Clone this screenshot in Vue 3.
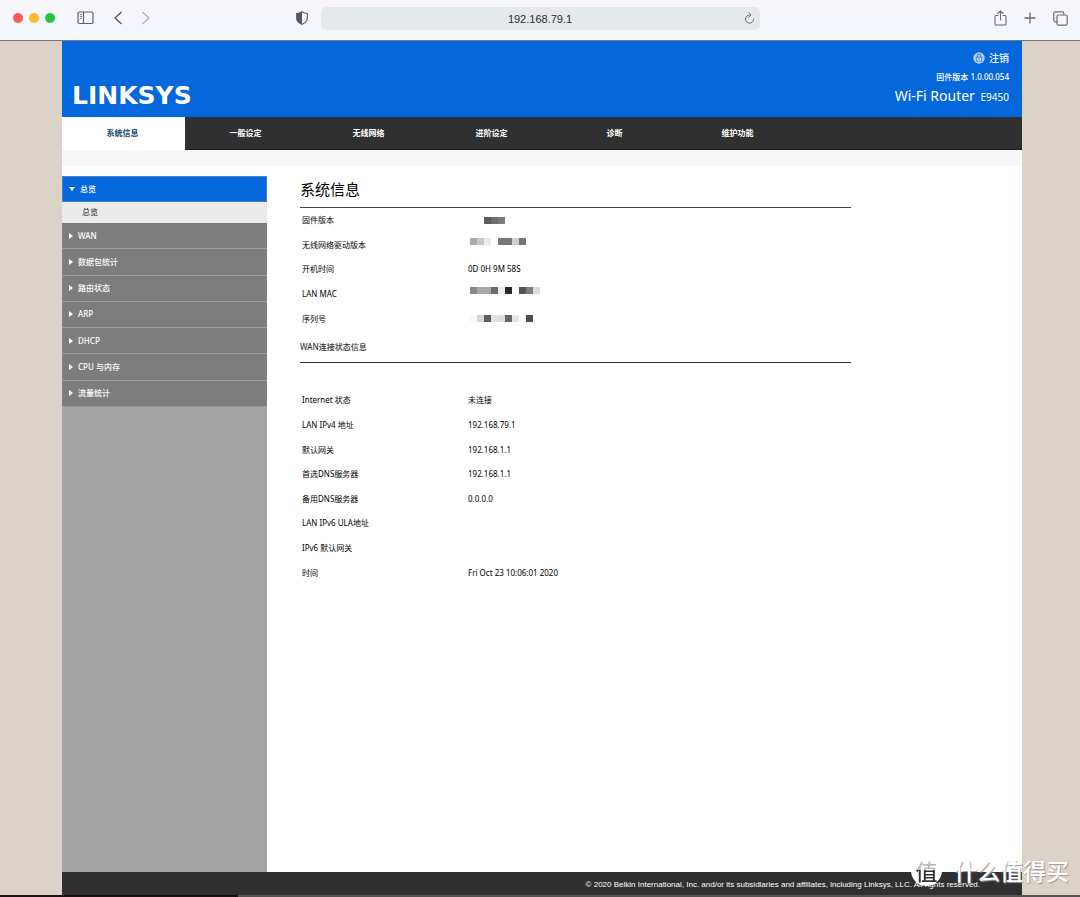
<script setup>
import { ref } from 'vue'

const address = ref('192.168.79.1')

const tabs = ['系统信息', '一般设定', '无线网络', '进阶设定', '诊断', '维护功能']
const sections = ['WAN', '数据包统计', '路由状态', 'ARP', 'DHCP', 'CPU 与内存', '流量统计']

// Masked values are lists of block colours.
const system = [
  { label: '固件版本', mask: ['', '', '#5c5c5c', '#6e6e6e', '#7c7c7c'] },
  { label: '无线网络驱动版本', mask: ['#adadad', '#c9c9c9', '#ebebeb', '', '#777', '#777', '#cfcfcf', '#757575'], raised: true },
  { label: '开机时间', value: '0D 0H 9M 58S' },
  { label: 'LAN MAC', mask: ['#8a8a8a', '#a8a8a8', '#a8a8a8', '#6c6c6c', '#ececec', '#272727', '', '#555', '#7b7b7b', '#dcdcdc'], raised: true },
  { label: '序列号', mask: ['#f8f8f8', '#d6d6d6', '#5e5e5e', '#e2e2e2', '#dedede', '#666', '#e6e6e6', '#fafafa', '#4d4d4d'] },
]

const wan = [
  { label: 'Internet 状态', value: '未连接' },
  { label: 'LAN IPv4 地址', value: '192.168.79.1' },
  { label: '默认网关', value: '192.168.1.1' },
  { label: '首选DNS服务器', value: '192.168.1.1' },
  { label: '备用DNS服务器', value: '0.0.0.0' },
  { label: 'LAN IPv6 ULA地址', value: '' },
  { label: 'IPv6 默认网关', value: '' },
  { label: '时间', value: 'Fri Oct 23 10:06:01 2020' },
]
</script>

<template>
  <div class="window">
    <header class="toolbar">
      <div class="tools left">
        <div class="lights">
          <button class="light red" aria-label="关闭"></button>
          <button class="light yellow" aria-label="最小化"></button>
          <button class="light green" aria-label="全屏"></button>
        </div>
        <button class="tool sidebar-tool" aria-label="边栏">
          <svg width="17" height="14" viewBox="0 0 17 14" fill="none" stroke="#5d6064">
            <rect x="1" y="1" width="15" height="11.5" rx="1.5" stroke-width="1.2" />
            <path d="M6.5 1v11.5" stroke-width="1.1" />
            <path d="M2.8 3.5h2M2.8 5.5h2M2.8 7.5h2" stroke-width=".8" />
          </svg>
        </button>
        <button class="tool back" aria-label="后退">
          <svg width="8" height="14" viewBox="0 0 8 14" fill="none" stroke="#505357" stroke-width="1.3" stroke-linecap="round" stroke-linejoin="round"><path d="M7 1.5 1 7l6 5.5" /></svg>
        </button>
        <button class="tool" aria-label="前进">
          <svg width="8" height="14" viewBox="0 0 8 14" fill="none" stroke="#aeb1b5" stroke-width="1.2" stroke-linecap="round" stroke-linejoin="round"><path d="m1 1.5 6 5.5-6 5.5" /></svg>
        </button>
        <button class="tool shield" aria-label="隐私报告">
          <svg width="12" height="14" viewBox="0 0 12 14">
            <path d="M6 .8C7.800 2 9.500 2.400 11.300 2.500V7.500C11.300 10.300 9 12 6 13.300 3 12 .7 10.300 .7 7.500V2.500C2.500 2.400 4.200 2 6 .8Z" fill="none" stroke="#55585c" stroke-width="1.1" />
            <path d="M6 .8v12.500C3 12 .7 10.300 .7 7.500V2.500C2.500 2.400 4.200 2 6 .8Z" fill="#55585c" />
          </svg>
        </button>
      </div>
      <div class="address">
        <input v-model="address" type="text" aria-label="地址" />
        <button class="tool" aria-label="重新载入">
          <svg width="11" height="12" viewBox="0 0 11 12" fill="none" stroke="#6b6e72" stroke-linecap="round" stroke-linejoin="round"><path d="M5.500 3A4.100 4.100 0 1 0 9.600 7M4.800 .7 7 3 4.800 5.200" /></svg>
        </button>
      </div>
      <div class="tools right">
        <button class="tool" aria-label="共享">
          <svg width="13" height="16" viewBox="0 0 13 16" fill="none" stroke="#6a6d71" stroke-width="1.1" stroke-linecap="round" stroke-linejoin="round"><path d="M4 5.500H2Q1 5.500 1 6.500V14Q1 15 2 15H11Q12 15 12 14V6.500Q12 5.500 11 5.500H9M6.500 10V1M3.800 3.500 6.500 .8 9.200 3.500" /></svg>
        </button>
        <button class="tool" aria-label="新标签页">
          <svg width="12" height="12" viewBox="0 0 12 12" stroke="#6a6d71" stroke-width="1.3" stroke-linecap="round"><path d="M6 1v10M1 6h10" /></svg>
        </button>
        <button class="tool" aria-label="标签页概览">
          <svg width="15" height="15" viewBox="0 0 15 15" fill="none" stroke="#6a6d71" stroke-width="1.2"><rect x="4" y="4" width="10.200" height="10.200" rx="1.500" /><path d="M4 10.800H2.300Q.8 10.800 .8 9.300V2.300Q.8 .8 2.300 .8H9.300Q10.800 .8 10.800 2.300V4" /></svg>
        </button>
      </div>
    </header>

    <div class="stage">
      <div class="site">
        <div class="banner">
          <a class="brand" href="#">LINKSYS</a>
          <div class="device">
            <a class="logout" href="#">
              <svg width="12" height="12" viewBox="0 0 12 12">
                <circle cx="6" cy="6" r="5.700" fill="#b5d2f5" />
                <path d="M4.300 5.500V3.800a1.700 1.700 0 0 1 3.400 0V5.500" fill="none" stroke="#2d6fc4" />
                <rect x="3.300" y="5.200" width="5.400" height="3.900" fill="#d7e7fb" stroke="#3977c6" stroke-width=".8" />
                <path d="M6 6.200v1.800" stroke="#2d6fc4" />
              </svg>
              注销
            </a>
            <span class="firmware">固件版本 1.0.00.054</span>
            <span class="model">Wi-Fi Router <small>E9450</small></span>
          </div>
        </div>

        <nav class="tabs">
          <a v-for="(tab, i) in tabs" :key="tab" href="#" :class="{ active: i === 0 }">{{ tab }}</a>
        </nav>
        <div class="strip"></div>

        <div class="body">
          <aside class="menu">
            <a class="entry open" href="#"><i class="arrow down"></i>总览</a>
            <a class="sub" href="#">总览</a>
            <div class="sections">
              <a v-for="name in sections" :key="name" class="entry" href="#"><i class="arrow"></i>{{ name }}</a>
            </div>
          </aside>

          <main class="content">
            <h1>系统信息</h1>
            <table class="system">
              <tbody>
                <tr v-for="row in system" :key="row.label">
                  <th scope="row">{{ row.label }}</th>
                  <td :class="{ raised: row.raised }">
                    <span v-if="row.mask" class="mask"><i v-for="(tone, i) in row.mask" :key="i" :style="{ background: tone }"></i></span>
                    <template v-else>{{ row.value }}</template>
                  </td>
                </tr>
              </tbody>
            </table>
            <h2>WAN连接状态信息</h2>
            <table class="wan">
              <tbody>
                <tr v-for="row in wan" :key="row.label">
                  <th scope="row">{{ row.label }}</th>
                  <td>{{ row.value }}</td>
                </tr>
              </tbody>
            </table>
          </main>
        </div>

        <footer>© 2020 Belkin International, Inc. and/or its subsidiaries and affiliates, including Linksys, LLC. All rights reserved.</footer>
      </div>
    </div>
    <div class="desktop-edge"></div>

    <div class="watermark"><span class="seal"><b>值</b></span><span>什么值得买</span></div>
  </div>
</template>

<style>
body {
  margin: 0;
  background: #dbd3c8;
}
</style>

<style scoped>
* {
  box-sizing: border-box;
}
.window {
  position: relative;
  display: flex;
  flex-direction: column;
  min-height: 100vh;
  font: 8px/12px "Noto Sans", "Noto Sans CJK SC", sans-serif;
  color: #000;
}
a {
  color: inherit;
  text-decoration: none;
}
button {
  border: 0;
  padding: 0;
  background: none;
}
svg {
  display: block;
}

.toolbar {
  display: grid;
  grid-template-columns: 1fr minmax(0, 439px) 1fr;
  align-items: center;
  height: 41px;
  padding-bottom: 4px;
  background: linear-gradient(#f7f5fa, #f3f7fb 60%);
  border-bottom: 1px solid #74777c;
}
.tools {
  display: flex;
  align-items: center;
}
.left {
  padding: 0 13px;
}
.lights {
  display: flex;
  gap: 6px;
}
.light {
  width: 10px;
  height: 10px;
  border-radius: 50%;
}
.red {
  background: #fc5b57;
}
.yellow {
  background: #fdb92d;
}
.green {
  background: #27c53f;
}
.sidebar-tool {
  margin-left: 22px;
}
.back {
  margin: 0 20px;
}
.shield {
  margin-left: auto;
}
.address {
  display: flex;
  align-items: center;
  height: 23px;
  padding: 0 5px 0 16px;
  border-radius: 5px;
  background: #e6e9ec;
}
.address input {
  flex: 1;
  min-width: 0;
  border: 0;
  padding: 1px 0 0;
  background: none;
  color: #2b2d30;
  font: 11px/16px "Liberation Sans", sans-serif;
  text-align: center;
  outline: 0;
}
.right {
  justify-content: flex-end;
  gap: 17px;
  padding-right: 12px;
}

.stage {
  flex: 1;
  display: flex;
  justify-content: center;
  padding-left: 4px;
}
.site {
  display: flex;
  flex-direction: column;
  width: 100%;
  max-width: 960px;
  background: #fff;
}
.banner {
  display: flex;
  justify-content: space-between;
  align-items: flex-end;
  height: 76px;
  padding: 0 13px 10px 10px;
  background: #0567dc;
  color: #fff;
}
.brand {
  font: bold 25px/22px "DejaVu Sans", sans-serif;
}
.device {
  display: flex;
  flex-direction: column;
  align-items: flex-end;
}
.logout {
  display: flex;
  align-items: center;
  gap: 4px;
  font-size: 10px;
  line-height: 16px;
  font-weight: 500;
}
.firmware {
  margin-top: 5px;
  font-weight: 500;
}
.model {
  margin-top: 3px;
  font-size: 14px;
  line-height: 20px;
}
.model small {
  margin-left: 2px;
  font-size: 10px;
}

.tabs {
  display: flex;
  height: 33px;
  background: #303030;
  border-bottom: 1px solid #1d1d1d;
  color: #fff;
}
.tabs a {
  flex: 0 1 123px;
  padding-right: 2px;
  font-weight: bold;
  line-height: 32px;
  text-align: center;
}
.tabs .active {
  height: 33px;
  background: #fff;
  color: #204a78;
}
.strip {
  height: 16px;
  background: #f7f7f8;
}

.body {
  flex: 1;
  display: flex;
  margin-top: 10px;
}
.menu {
  flex: 0 0 205px;
  background: #a4a4a4;
  color: #fff;
}
.sections {
  display: flex;
  flex-direction: column;
  height: 184px;
}
.entry {
  flex: 1;
  display: flex;
  align-items: center;
  gap: 5px;
  height: 26px;
  padding-left: 7px;
  background: #7d7d7d;
  border-bottom: 1px solid #9a9a9a;
  font-weight: 500;
}
.open {
  background: #0567dc;
  border: 1px solid #477fc4;
  padding-left: 6px;
}
.arrow {
  border: 3px solid transparent;
  border-left: 4px solid #fff;
  border-right: 0;
}
.down {
  border: 3px solid transparent;
  border-top: 4px solid #fff;
  border-bottom: 0;
}
.sub {
  display: block;
  height: 21px;
  padding-left: 20px;
  background: #eaeaea;
  color: #222;
  line-height: 20px;
}
.content {
  flex: 1;
  max-width: 584px;
  padding-left: 33px;
}
h1 {
  margin: 0;
  padding: 2px 0 7px;
  border-bottom: 1px solid #444;
  font-size: 15px;
  line-height: 22px;
  font-weight: normal;
}
h2 {
  margin: 10px 0 25px;
  padding-bottom: 9px;
  border-bottom: 1px solid #333;
  font-size: 8px;
  line-height: 12px;
  font-weight: 500;
  color: #333;
}
table {
  width: 100%;
  border-spacing: 0;
}
.system {
  height: 123px;
}
.wan {
  height: 197px;
}
th {
  width: 168px;
  padding: 0 0 0 2px;
  font-weight: normal;
  text-align: left;
}
td {
  padding: 0;
}
.mask {
  display: flex;
  padding-left: 2px;
}
.mask i {
  width: 7px;
  height: 7px;
}
.raised {
  padding-top: 5px;
  vertical-align: top;
}

footer {
  height: 23px;
  padding-right: 42px;
  background: #303030;
  color: #fff;
  font: 8px/25px "Liberation Sans", sans-serif;
  text-align: right;
}
.desktop-edge {
  height: 2px;
  background: linear-gradient(90deg, #1a1012 22%, #555 22%);
}

.watermark {
  position: absolute;
  right: 11px;
  bottom: 11px;
  display: flex;
  align-items: center;
  gap: 12px;
  color: #fff;
  font: 500 23px/32px "Noto Sans CJK SC", sans-serif;
  text-shadow: 1px 1px 1px #999;
}
.seal {
  width: 31px;
  height: 31px;
  border-radius: 50%;
  background: #fff;
  font-size: 22px;
  line-height: 31px;
  text-align: center;
  text-shadow: none;
}
.seal b {
  display: block;
  font-weight: 500;
  background: linear-gradient(#bbb 50%, #303030 50%);
  background-clip: text;
  color: transparent;
}
</style>
